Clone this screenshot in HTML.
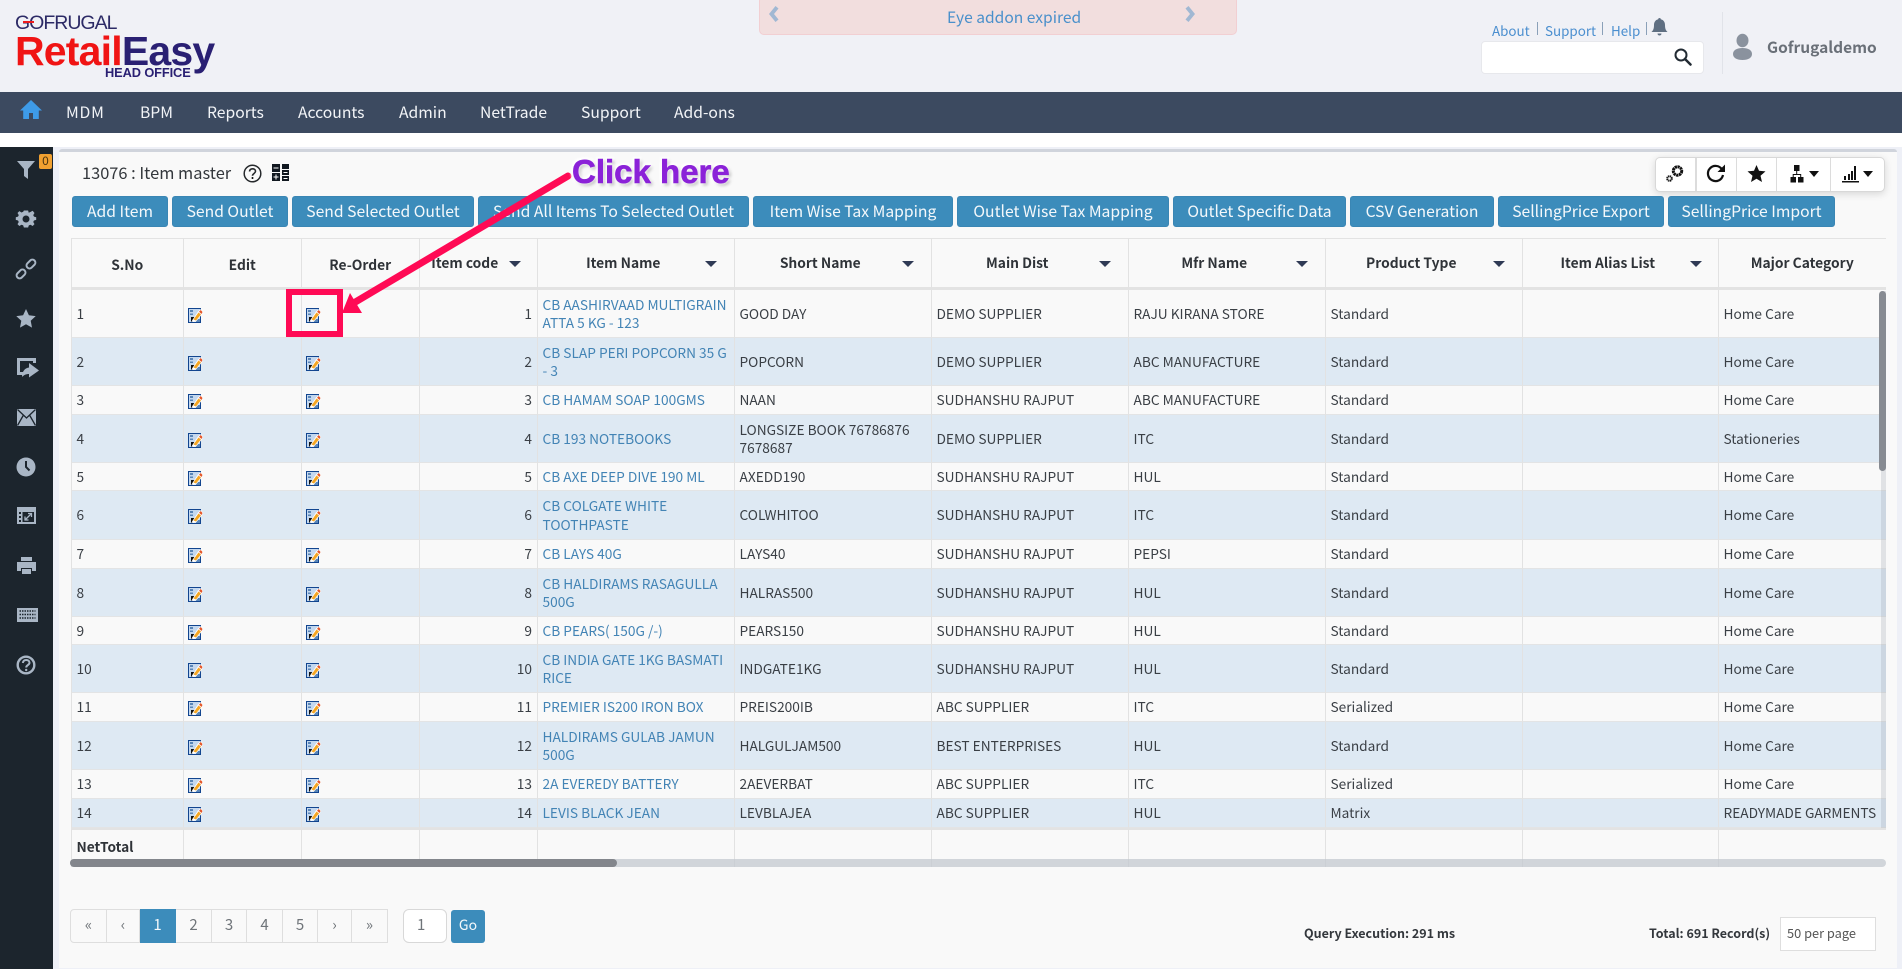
<!DOCTYPE html>
<html><head><meta charset="utf-8"><title>Item master</title>
<style>
html,body{margin:0;padding:0}
body{width:1902px;height:969px;position:relative;overflow:hidden;background:#fff;font-family:"Noto Sans CJK JP","Liberation Sans",sans-serif;color:#333}
.a{position:absolute;white-space:nowrap}
.nav{color:#f2f4f7;font-size:15.700px;line-height:20px;top:102px}
.btn{position:absolute;top:196px;height:31px;line-height:28px;background:#3c8cbb;color:#f4f8fb;border-radius:3px;text-align:center;font-size:15.700px;white-space:nowrap;box-sizing:border-box;border:1px solid #3a86b4}
table{position:absolute;left:71px;top:238px;border-collapse:separate;border-spacing:0;table-layout:fixed;width:1815px;font-size:13.700px;line-height:18.2px;color:#3a3f45}
th,td{box-sizing:border-box;border-right:1px solid #e2e2e2;border-bottom:1px solid #e3e4e5;padding:0 5px 1px 4.500px;white-space:nowrap;overflow:hidden}
td:last-child,th:last-child{border-right:0}
th{height:52px;border-top:1px solid #e3e3e3;border-bottom:3px solid #e3e3e3;font-size:13.800px;text-align:center;position:relative;color:#2f3338;background:#f9f9f9;padding-top:3px;padding-bottom:0}
th.s{padding-top:0;padding-bottom:2px}
th:first-child,td:first-child{border-left:1px solid #e2e2e2}
th i{position:absolute;top:22px;width:0;height:0;border-left:6px solid transparent;border-right:6px solid transparent;border-top:6px solid #2f3a55}
tr.o td{background:#f9f9f9}
tr.e td{background:#dee9f3}
td a{color:#4384b5;text-decoration:none}
td.r{text-align:right}
.pg{position:absolute;top:909px;height:34px;line-height:30px;box-sizing:border-box;text-align:center;color:#6f7479;font-size:15px;border:1px solid #dedede;border-left-width:0;background:#f9f9f9}
.ic{position:absolute;width:15px;height:15px;left:4px;top:50%;margin-top:-6px}
</style></head><body>
<svg width="0" height="0" style="position:absolute"><defs>
<symbol id="ed" viewBox="0 0 15 15">
<rect x=".5" y=".5" width="12" height="14" fill="#c4d8ef" stroke="#12458f"/>
<path d="M2 2h3v2H2zM2 5.500h3v1.500H2zM8 11h4v3H8z" fill="#5a86b8"/>
<path d="M3 9h4v4.500H3z" fill="#111"/>
<path d="M4 12.500 10 3.500 13 1 15 4 13.500 7 8 13.500 4.500 14z" fill="#fff"/>
<path d="M5.500 11.500 10.500 4.500 13 6.500 8 12.500z" fill="#f5a623"/>
<path d="M11 3.800 12.800 2 14.500 4 13.500 6z" fill="#e4572a"/>
</symbol></defs></svg>

<!-- header -->
<div class="a" style="left:0;top:0;width:1902px;height:92px;background:#f0f1f6"></div>
<div class="a" style="left:0;top:92px;width:1902px;height:41px;background:#3c4a60"></div>

<!-- logo -->
<div class="a" style="left:15px;top:12px;font-family:'Liberation Sans',sans-serif;font-size:19.500px;line-height:22px;color:#2c2a66;letter-spacing:-1px">GOFRUGAL</div>
<div class="a" style="left:23px;top:21px;width:11px;height:1.500px;background:#ee1c1c"></div>
<div class="a" style="left:15px;top:28px;font-family:'Liberation Sans',sans-serif;font-size:41px;line-height:46px;font-weight:bold;letter-spacing:-.8px;color:#f01414">Retail<span style="color:#2a2073">Easy</span></div>
<div class="a" style="left:105px;top:65px;font-family:'Liberation Sans',sans-serif;font-size:12.800px;line-height:16px;font-weight:bold;color:#2a2073;letter-spacing:-.1px">HEAD OFFICE</div>

<!-- nav -->
<svg class="a" style="left:19px;top:99px" width="24" height="21" viewBox="0 0 24 21"><path d="M12 1 1 11.500h3.200V20h5.800v-6h4v6h5.800v-8.500H23z" fill="#3e9be8"/></svg>
<div class="a nav" style="left:66px;letter-spacing:.8px">MDM</div>
<div class="a nav" style="left:140px">BPM</div>
<div class="a nav" style="left:207px">Reports</div>
<div class="a nav" style="left:298px">Accounts</div>
<div class="a nav" style="left:399px">Admin</div>
<div class="a nav" style="left:480px">NetTrade</div>
<div class="a nav" style="left:581px">Support</div>
<div class="a nav" style="left:674px">Add-ons</div>

<!-- alert -->
<div class="a" style="left:759px;top:-4px;width:478px;height:39px;box-sizing:border-box;background:#f2dede;border:1px solid #f2cfd2;border-radius:5px"></div>
<div class="a" style="left:947px;top:7px;font-size:15.600px;line-height:20px;color:#4a90cb">Eye addon expired</div>
<svg class="a" style="left:767px;top:5px" width="14" height="18" viewBox="0 0 14 18"><path d="M8.500 1 2 9 8.500 17l3-2.500-4.500-5.500 4.500-5.500z" fill="#a1b8d3"/></svg>
<svg class="a" style="left:1183px;top:5px" width="14" height="18" viewBox="0 0 14 18"><path d="M5.500 1 12 9 5.500 17l-3-2.500L7 9 2.500 3.500z" fill="#a1b8d3"/></svg>

<!-- top right -->
<div class="a" style="left:1492px;top:21px;font-size:13.400px;line-height:18px;color:#4a8ecf">About</div>
<div class="a" style="left:1537px;top:22px;width:1px;height:13px;background:#8aa0b8"></div>
<div class="a" style="left:1545px;top:21px;font-size:13.400px;line-height:18px;color:#4a8ecf">Support</div>
<div class="a" style="left:1602px;top:22px;width:1px;height:13px;background:#8aa0b8"></div>
<div class="a" style="left:1611px;top:21px;font-size:13.400px;line-height:18px;color:#4a8ecf">Help</div>
<div class="a" style="left:1646px;top:22px;width:1px;height:13px;background:#8aa0b8"></div>
<svg class="a" style="left:1651px;top:17px" width="17" height="20" viewBox="0 0 17 20"><path d="M8.500 1c.8 0 1.300.6 1.300 1.300C12.600 3 14 5.300 14 8c0 4 1 5.500 2.500 7H.5C2 13.500 3 12 3 8c0-2.700 1.400-5 4.200-5.700C7.200 1.600 7.700 1 8.500 1zM6.500 16.500h4c0 1.200-.9 2-2 2s-2-.8-2-2z" fill="#5f6f82"/></svg>
<div class="a" style="left:1481px;top:41px;width:223px;height:33px;box-sizing:border-box;background:#fff;border:1px solid #e7e8ec;border-radius:4px"></div>
<svg class="a" style="left:1674px;top:48px" width="18" height="18" viewBox="0 0 18 18"><circle cx="7" cy="7" r="5.500" fill="none" stroke="#222b33" stroke-width="2"/><path d="M11 11l5.500 5.500" stroke="#222b33" stroke-width="2.500" stroke-linecap="round"/></svg>
<div class="a" style="left:1722px;top:12px;width:1px;height:62px;background:#e1e3e9"></div>
<svg class="a" style="left:1732px;top:33px" width="21" height="28" viewBox="0 0 21 28"><ellipse cx="10.500" cy="7.500" rx="6" ry="6.800" fill="#8a929e"/><path d="M1 21c0-4 4-6 9.500-6s9.500 2 9.500 6-4 6-9.500 6S1 25 1 21z" fill="#8a929e"/></svg>
<div class="a" style="left:1767px;top:37px;font-size:15.500px;line-height:20px;font-weight:bold;color:#6a7078">Gofrugaldemo</div>

<!-- sidebar + panel -->
<div class="a" style="left:0;top:147px;width:53px;height:822px;background:#1c252d"></div>
<div class="a" style="left:53px;top:147px;width:1849px;height:822px;background:#eef0f7"></div>
<div class="a" style="left:59px;top:149px;width:1838px;height:819px;box-sizing:border-box;background:#f9f9f9;border-top:3px solid #d0d4dc;border-radius:3px 3px 0 0"></div>

<div class="a" style="left:39px;top:154px;width:13px;height:15px;background:#f0a030;border-radius:2px;text-align:center;font-size:12px;line-height:14px;color:#4a3410">0</div>
<svg class="a" style="left:0;top:147px" width="53" height="540" viewBox="0 147 53 540" fill="#a9b6c5">
<path d="M17 161h18l-7 8v10l-4-3v-7z"/>
<g transform="translate(26 219)"><path d="M-2.500-9h5l.7 2.600 2-.8 2.600-1.500L10-6l-1.500 2.500.9 1.700L12-1v3l-2.600.8-.9 1.700L10 7l-2.200 2.200-2.500-1.500-2 .8L2.500 11h-5l-.8-2.500-2-.8-2.500 1.500L-10 7l1.500-2.500-.9-1.700L-12 2v-3l2.600-.8.9-1.700L-10-6l2.200-2.200 2.500 1.500 2-.8z" transform="scale(.85) translate(0 -1)"/><circle r="3.500" fill="#1c252d"/></g>
<g transform="translate(26 269)" fill="none" stroke="#a9b6c5" stroke-width="2"><rect x="-9" y="-3" width="10" height="6" rx="3" transform="rotate(-45) translate(-3 0)"/><rect x="-1" y="-3" width="10" height="6" rx="3" transform="rotate(-45) translate(3 0)"/></g>
<path d="M26 309l2.900 6.300 6.800.8-5 4.700 1.300 6.800-6-3.400-6 3.400 1.300-6.800-5-4.700 6.800-.8z"/>
<path d="M17 358h19v5h-3v-2H20v11h3v3h-6zM29 363l10 7.500-10 7v-3.500c-3 0-5 1-7 3 0-5 2.500-9 7-9.500z"/>
<path d="M17 409h19v17H17z" fill="#a9b6c5"/><path d="M17.500 409.500 26.500 418 35.500 409.500M17.500 425.500 23.500 415M35.500 425.500 29.500 415" fill="none" stroke="#1c252d" stroke-width="1.300"/>
<circle cx="26" cy="467" r="9.500"/><path d="M26 461v6l3.500 3.500" fill="none" stroke="#1c252d" stroke-width="2"/>
<path d="M17 507h19v17H17z"/><path d="M22.500 512H34v10H22.500zM19 512h2v2h-2zM19 516h2v2h-2zM19 520h2v2h-2z" fill="#1c252d"/><path d="M25 520l6-6M28 513.500h3.500V517M25 516.500v3.500h3.500" fill="none" stroke="#a9b6c5" stroke-width="1.300"/>
<path d="M21 557h11v4H21zM17 562h19v9h-4v-3H21v3h-4zM22 569h9v5h-9z"/>
<path d="M17 608h21v14H17z"/><path d="M19.500 611h16M19.500 614.500h16M19.500 618h16" stroke="#1c252d" stroke-width="1.400" stroke-dasharray="1.500 1"/>
<circle cx="26" cy="665" r="8.300" fill="none" stroke="#a9b6c5" stroke-width="2.400"/><path d="M22.800 663c.3-2 1.600-3 3.400-3 2 0 3.300 1.200 3.300 2.800 0 2.300-3.300 2.300-3.300 4.700" fill="none" stroke="#a9b6c5" stroke-width="2"/><circle cx="26.200" cy="670" r="1.200"/>
</svg>

<!-- title -->
<div class="a" style="left:82px;top:162px;font-size:16.400px;line-height:20px;color:#33373c">13076 : Item master</div>
<svg class="a" style="left:243px;top:164px" width="19" height="19" viewBox="0 0 19 19"><circle cx="9.500" cy="9.500" r="8.300" fill="none" stroke="#26292c" stroke-width="1.500"/><path d="M6.500 7.500c.2-1.700 1.400-2.700 3-2.700 1.800 0 3 1 3 2.500 0 2.200-3 2.200-3 4.500" fill="none" stroke="#26292c" stroke-width="1.600"/><circle cx="9.500" cy="14" r="1"/></svg>
<svg class="a" style="left:272px;top:164px" width="18" height="17" viewBox="0 0 18 17"><path d="M0 0h8v8H0zM10 0h7v5h-7zM0 9h8v8H0zM10 6h7v5h-7zM10 12h7v5h-7z" fill="#111820"/><path d="M1.500 4h5M4 10.500v5M1.500 13h5M11.500 8.500h4M11.500 14.500h4" stroke="#fff" stroke-width="1"/></svg>

<!-- toolbar -->
<div class="a" style="left:1655px;top:157px;width:230px;height:35px;box-sizing:border-box;background:#fff;border:1px solid #d8d8d8;border-radius:5px;box-shadow:0 2px 8px rgba(0,0,0,.14)"></div>
<div class="a" style="left:1695px;top:158px;width:2px;height:33px;background:#dcdcdc"></div>
<div class="a" style="left:1736px;top:158px;width:1px;height:33px;background:#dcdcdc"></div>
<div class="a" style="left:1776px;top:158px;width:1px;height:33px;background:#dcdcdc"></div>
<div class="a" style="left:1830px;top:158px;width:1px;height:33px;background:#dcdcdc"></div>
<svg class="a" style="left:1655px;top:157px" width="230" height="35" viewBox="1655 157 230 35">
<circle cx="1677.500" cy="171" r="4.200" fill="none" stroke="#111" stroke-width="3" stroke-dasharray="2.300 .5"/>
<circle cx="1669.500" cy="178.500" r="2.300" fill="none" stroke="#111" stroke-width="2" stroke-dasharray="1.300 .5"/>
<path d="M1722 169.500a7.600 7.600 0 1 0 1 5.500" fill="none" stroke="#111" stroke-width="2.200"/><path d="M1725 164.500v7.500h-7.500z" fill="#111"/>
<path d="M1756.500 165l2.500 5.800 6.500.6-5 4.300 1.500 6.300-5.500-3.300-5.500 3.300 1.500-6.300-5-4.300 6.500-.6z" fill="#111"/>
<path d="M1794 165h5.500v6H1794zM1790.500 177h5.500v5.500h-5.500zM1798 177h5.500v5.500H1798z" fill="#111"/><path d="M1796.700 171v3.500M1793.200 177v-2.500h7.500v2.500" fill="none" stroke="#111" stroke-width="1"/>
<path d="M1809 171h10l-5 6z" fill="#111"/>
<path d="M1842 181h17v1.500h-17zM1844 176h2v4h-2zM1848 174h2v6h-2zM1851 171h2v9h-2zM1854 166h2v14h-2z" fill="#111"/>
<path d="M1863 171h10l-5 6z" fill="#111"/>
</svg>

<!-- buttons -->
<div class="btn" style="left:72px;width:96px">Add Item</div>
<div class="btn" style="left:172px;width:116px">Send Outlet</div>
<div class="btn" style="left:292px;width:182px">Send Selected Outlet</div>
<div class="btn" style="left:478px;width:271px">Send All Items To Selected Outlet</div>
<div class="btn" style="left:753px;width:200px">Item Wise Tax Mapping</div>
<div class="btn" style="left:957px;width:212px">Outlet Wise Tax Mapping</div>
<div class="btn" style="left:1173px;width:173px">Outlet Specific Data</div>
<div class="btn" style="left:1350px;width:144px">CSV Generation</div>
<div class="btn" style="left:1498px;width:166px">SellingPrice Export</div>
<div class="btn" style="left:1668px;width:167px">SellingPrice Import</div>

<!-- table -->
<table>
<colgroup><col style="width:113px"><col style="width:118px"><col style="width:118px"><col style="width:118px"><col style="width:197px"><col style="width:197px"><col style="width:197px"><col style="width:197px"><col style="width:197px"><col style="width:196px"><col style="width:167px"></colgroup>
<tr><th>S.No</th><th>Edit</th><th>Re-Order</th>
<th class="s" style="padding-right:32px">Item code<i style="left:89px"></i></th>
<th class="s" style="padding-right:30px">Item Name<i style="left:167px"></i></th>
<th class="s" style="padding-right:30px">Short Name<i style="left:167px"></i></th>
<th class="s" style="padding-right:30px">Main Dist<i style="left:167px"></i></th>
<th class="s" style="padding-right:30px">Mfr Name<i style="left:167px"></i></th>
<th class="s" style="padding-right:30px">Product Type<i style="left:167px"></i></th>
<th class="s" style="padding-right:30px">Item Alias List<i style="left:167px"></i></th>
<th class="s">Major Category</th></tr>
<tr class="o" style="height:48px"><td>1</td><td style="position:relative"><svg class="ic"><use href="#ed"/></svg></td><td style="position:relative"><svg class="ic"><use href="#ed"/></svg></td><td class="r">1</td><td><a>CB AASHIRVAAD MULTIGRAIN<br>ATTA 5 KG - 123</a></td><td>GOOD DAY</td><td>DEMO SUPPLIER</td><td>RAJU KIRANA STORE</td><td>Standard</td><td></td><td>Home Care</td></tr>
<tr class="e" style="height:48px"><td>2</td><td style="position:relative"><svg class="ic"><use href="#ed"/></svg></td><td style="position:relative"><svg class="ic"><use href="#ed"/></svg></td><td class="r">2</td><td><a>CB SLAP PERI POPCORN 35 G<br>- 3</a></td><td>POPCORN</td><td>DEMO SUPPLIER</td><td>ABC MANUFACTURE</td><td>Standard</td><td></td><td>Home Care</td></tr>
<tr class="o" style="height:29px"><td>3</td><td style="position:relative"><svg class="ic"><use href="#ed"/></svg></td><td style="position:relative"><svg class="ic"><use href="#ed"/></svg></td><td class="r">3</td><td><a>CB HAMAM SOAP 100GMS</a></td><td>NAAN</td><td>SUDHANSHU RAJPUT</td><td>ABC MANUFACTURE</td><td>Standard</td><td></td><td>Home Care</td></tr>
<tr class="e" style="height:48px"><td>4</td><td style="position:relative"><svg class="ic"><use href="#ed"/></svg></td><td style="position:relative"><svg class="ic"><use href="#ed"/></svg></td><td class="r">4</td><td><a>CB 193 NOTEBOOKS</a></td><td>LONGSIZE BOOK 76786876<br>7678687</td><td>DEMO SUPPLIER</td><td>ITC</td><td>Standard</td><td></td><td>Stationeries</td></tr>
<tr class="o" style="height:28px"><td>5</td><td style="position:relative"><svg class="ic"><use href="#ed"/></svg></td><td style="position:relative"><svg class="ic"><use href="#ed"/></svg></td><td class="r">5</td><td><a>CB AXE DEEP DIVE 190 ML</a></td><td>AXEDD190</td><td>SUDHANSHU RAJPUT</td><td>HUL</td><td>Standard</td><td></td><td>Home Care</td></tr>
<tr class="e" style="height:49px"><td>6</td><td style="position:relative"><svg class="ic"><use href="#ed"/></svg></td><td style="position:relative"><svg class="ic"><use href="#ed"/></svg></td><td class="r">6</td><td><a>CB COLGATE WHITE<br>TOOTHPASTE</a></td><td>COLWHITOO</td><td>SUDHANSHU RAJPUT</td><td>ITC</td><td>Standard</td><td></td><td>Home Care</td></tr>
<tr class="o" style="height:29px"><td>7</td><td style="position:relative"><svg class="ic"><use href="#ed"/></svg></td><td style="position:relative"><svg class="ic"><use href="#ed"/></svg></td><td class="r">7</td><td><a>CB LAYS 40G</a></td><td>LAYS40</td><td>SUDHANSHU RAJPUT</td><td>PEPSI</td><td>Standard</td><td></td><td>Home Care</td></tr>
<tr class="e" style="height:48px"><td>8</td><td style="position:relative"><svg class="ic"><use href="#ed"/></svg></td><td style="position:relative"><svg class="ic"><use href="#ed"/></svg></td><td class="r">8</td><td><a>CB HALDIRAMS RASAGULLA<br>500G</a></td><td>HALRAS500</td><td>SUDHANSHU RAJPUT</td><td>HUL</td><td>Standard</td><td></td><td>Home Care</td></tr>
<tr class="o" style="height:28px"><td>9</td><td style="position:relative"><svg class="ic"><use href="#ed"/></svg></td><td style="position:relative"><svg class="ic"><use href="#ed"/></svg></td><td class="r">9</td><td><a>CB PEARS( 150G /-)</a></td><td>PEARS150</td><td>SUDHANSHU RAJPUT</td><td>HUL</td><td>Standard</td><td></td><td>Home Care</td></tr>
<tr class="e" style="height:48px"><td>10</td><td style="position:relative"><svg class="ic"><use href="#ed"/></svg></td><td style="position:relative"><svg class="ic"><use href="#ed"/></svg></td><td class="r">10</td><td><a>CB INDIA GATE 1KG BASMATI<br>RICE</a></td><td>INDGATE1KG</td><td>SUDHANSHU RAJPUT</td><td>HUL</td><td>Standard</td><td></td><td>Home Care</td></tr>
<tr class="o" style="height:29px"><td>11</td><td style="position:relative"><svg class="ic"><use href="#ed"/></svg></td><td style="position:relative"><svg class="ic"><use href="#ed"/></svg></td><td class="r">11</td><td><a>PREMIER IS200 IRON BOX</a></td><td>PREIS200IB</td><td>ABC SUPPLIER</td><td>ITC</td><td>Serialized</td><td></td><td>Home Care</td></tr>
<tr class="e" style="height:48px"><td>12</td><td style="position:relative"><svg class="ic"><use href="#ed"/></svg></td><td style="position:relative"><svg class="ic"><use href="#ed"/></svg></td><td class="r">12</td><td><a>HALDIRAMS GULAB JAMUN<br>500G</a></td><td>HALGULJAM500</td><td>BEST ENTERPRISES</td><td>HUL</td><td>Standard</td><td></td><td>Home Care</td></tr>
<tr class="o" style="height:29px"><td>13</td><td style="position:relative"><svg class="ic"><use href="#ed"/></svg></td><td style="position:relative"><svg class="ic"><use href="#ed"/></svg></td><td class="r">13</td><td><a>2A EVEREDY BATTERY</a></td><td>2AEVERBAT</td><td>ABC SUPPLIER</td><td>ITC</td><td>Serialized</td><td></td><td>Home Care</td></tr>
<tr class="e" style="height:29px"><td>14</td><td style="position:relative"><svg class="ic"><use href="#ed"/></svg></td><td style="position:relative"><svg class="ic"><use href="#ed"/></svg></td><td class="r">14</td><td><a>LEVIS BLACK JEAN</a></td><td>LEVBLAJEA</td><td>ABC SUPPLIER</td><td>HUL</td><td>Matrix</td><td></td><td>READYMADE GARMENTS</td></tr>
<tr class="o" style="height:39px"><td style="border-top:2px solid #e3e3e3;font-weight:bold;vertical-align:top;padding-top:7px;color:#2f3338;border-bottom:0">NetTotal</td><td style="border-top:2px solid #e3e3e3;border-bottom:0"></td><td style="border-top:2px solid #e3e3e3;border-bottom:0"></td><td style="border-top:2px solid #e3e3e3;border-bottom:0"></td><td style="border-top:2px solid #e3e3e3;border-bottom:0"></td><td style="border-top:2px solid #e3e3e3;border-bottom:0"></td><td style="border-top:2px solid #e3e3e3;border-bottom:0"></td><td style="border-top:2px solid #e3e3e3;border-bottom:0"></td><td style="border-top:2px solid #e3e3e3;border-bottom:0"></td><td style="border-top:2px solid #e3e3e3;border-bottom:0"></td><td style="border-top:2px solid #e3e3e3;border-bottom:0"></td></tr>
</table>

<!-- scrollbars -->
<div class="a" style="left:1881px;top:291px;width:5px;height:537px;background:rgba(150,160,170,.25)"></div>
<div class="a" style="left:1879px;top:291px;width:7px;height:180px;background:#878b92;border-radius:4px"></div>
<div class="a" style="left:70px;top:859px;width:1816px;height:8px;background:rgba(195,200,207,.75);border-radius:4px"></div>
<div class="a" style="left:70px;top:859px;width:547px;height:8px;background:#83868c;border-radius:4px"></div>

<!-- pagination -->
<div class="pg" style="left:70px;width:37px;border-left-width:1px;border-radius:4px 0 0 4px">«</div>
<div class="pg" style="left:107px;width:33px">‹</div>
<div class="pg" style="left:140px;width:36px;background:#3c8cbb;color:#f4f8fb;border-color:#3c8cbb">1</div>
<div class="pg" style="left:176px;width:36px">2</div>
<div class="pg" style="left:212px;width:35px">3</div>
<div class="pg" style="left:247px;width:36px">4</div>
<div class="pg" style="left:283px;width:35px">5</div>
<div class="pg" style="left:318px;width:34px">›</div>
<div class="pg" style="left:352px;width:36px">»</div>
<div class="a" style="left:403px;top:909px;width:44px;height:34px;box-sizing:border-box;background:#fff;border:1px solid #d8d8d8;border-radius:6px;font-size:15px;line-height:30px;padding-left:13px;color:#6f7479">1</div>
<div class="a" style="left:451px;top:910px;width:34px;height:33px;background:#3c8cbb;border-radius:3px;color:#f4f8fb;text-align:center;font-size:14px;line-height:31px">Go</div>

<div class="a" style="left:1304px;top:925px;font-size:12.500px;line-height:16px;font-weight:bold;color:#33373c">Query Execution: 291 ms</div>
<div class="a" style="left:1649px;top:925px;font-size:12.500px;line-height:16px;font-weight:bold;color:#33373c">Total: 691 Record(s)</div>
<div class="a" style="left:1780px;top:917px;width:96px;height:34px;box-sizing:border-box;background:#fff;border:1px solid #dedede;font-size:12.800px;line-height:30px;padding-left:6px;color:#555">50 per page</div>

<!-- annotation -->
<svg class="a" style="left:0;top:0" width="1902" height="969" viewBox="0 0 1902 969">
<path d="M568 176 352 304" stroke="#ff0a55" stroke-width="7" stroke-linecap="round"/>
<path d="M342 313 350 293 362 313z" fill="#ff0a55"/>
<rect x="289" y="292" width="51" height="42" fill="none" stroke="#ff0a55" stroke-width="6"/>
</svg>
<div class="a" style="left:572px;top:153px;font-family:'Liberation Sans',sans-serif;font-size:33px;line-height:38px;font-weight:bold;color:#8b22d8;-webkit-text-stroke:.6px #8b22d8;text-shadow:0 0 3px #fff,0 0 4px #fff,2px 2px 3px #aaa,-2px -2px 2px #fff,2px -2px 2px #fff,-2px 2px 2px #fff">Click here</div>
</body></html>
